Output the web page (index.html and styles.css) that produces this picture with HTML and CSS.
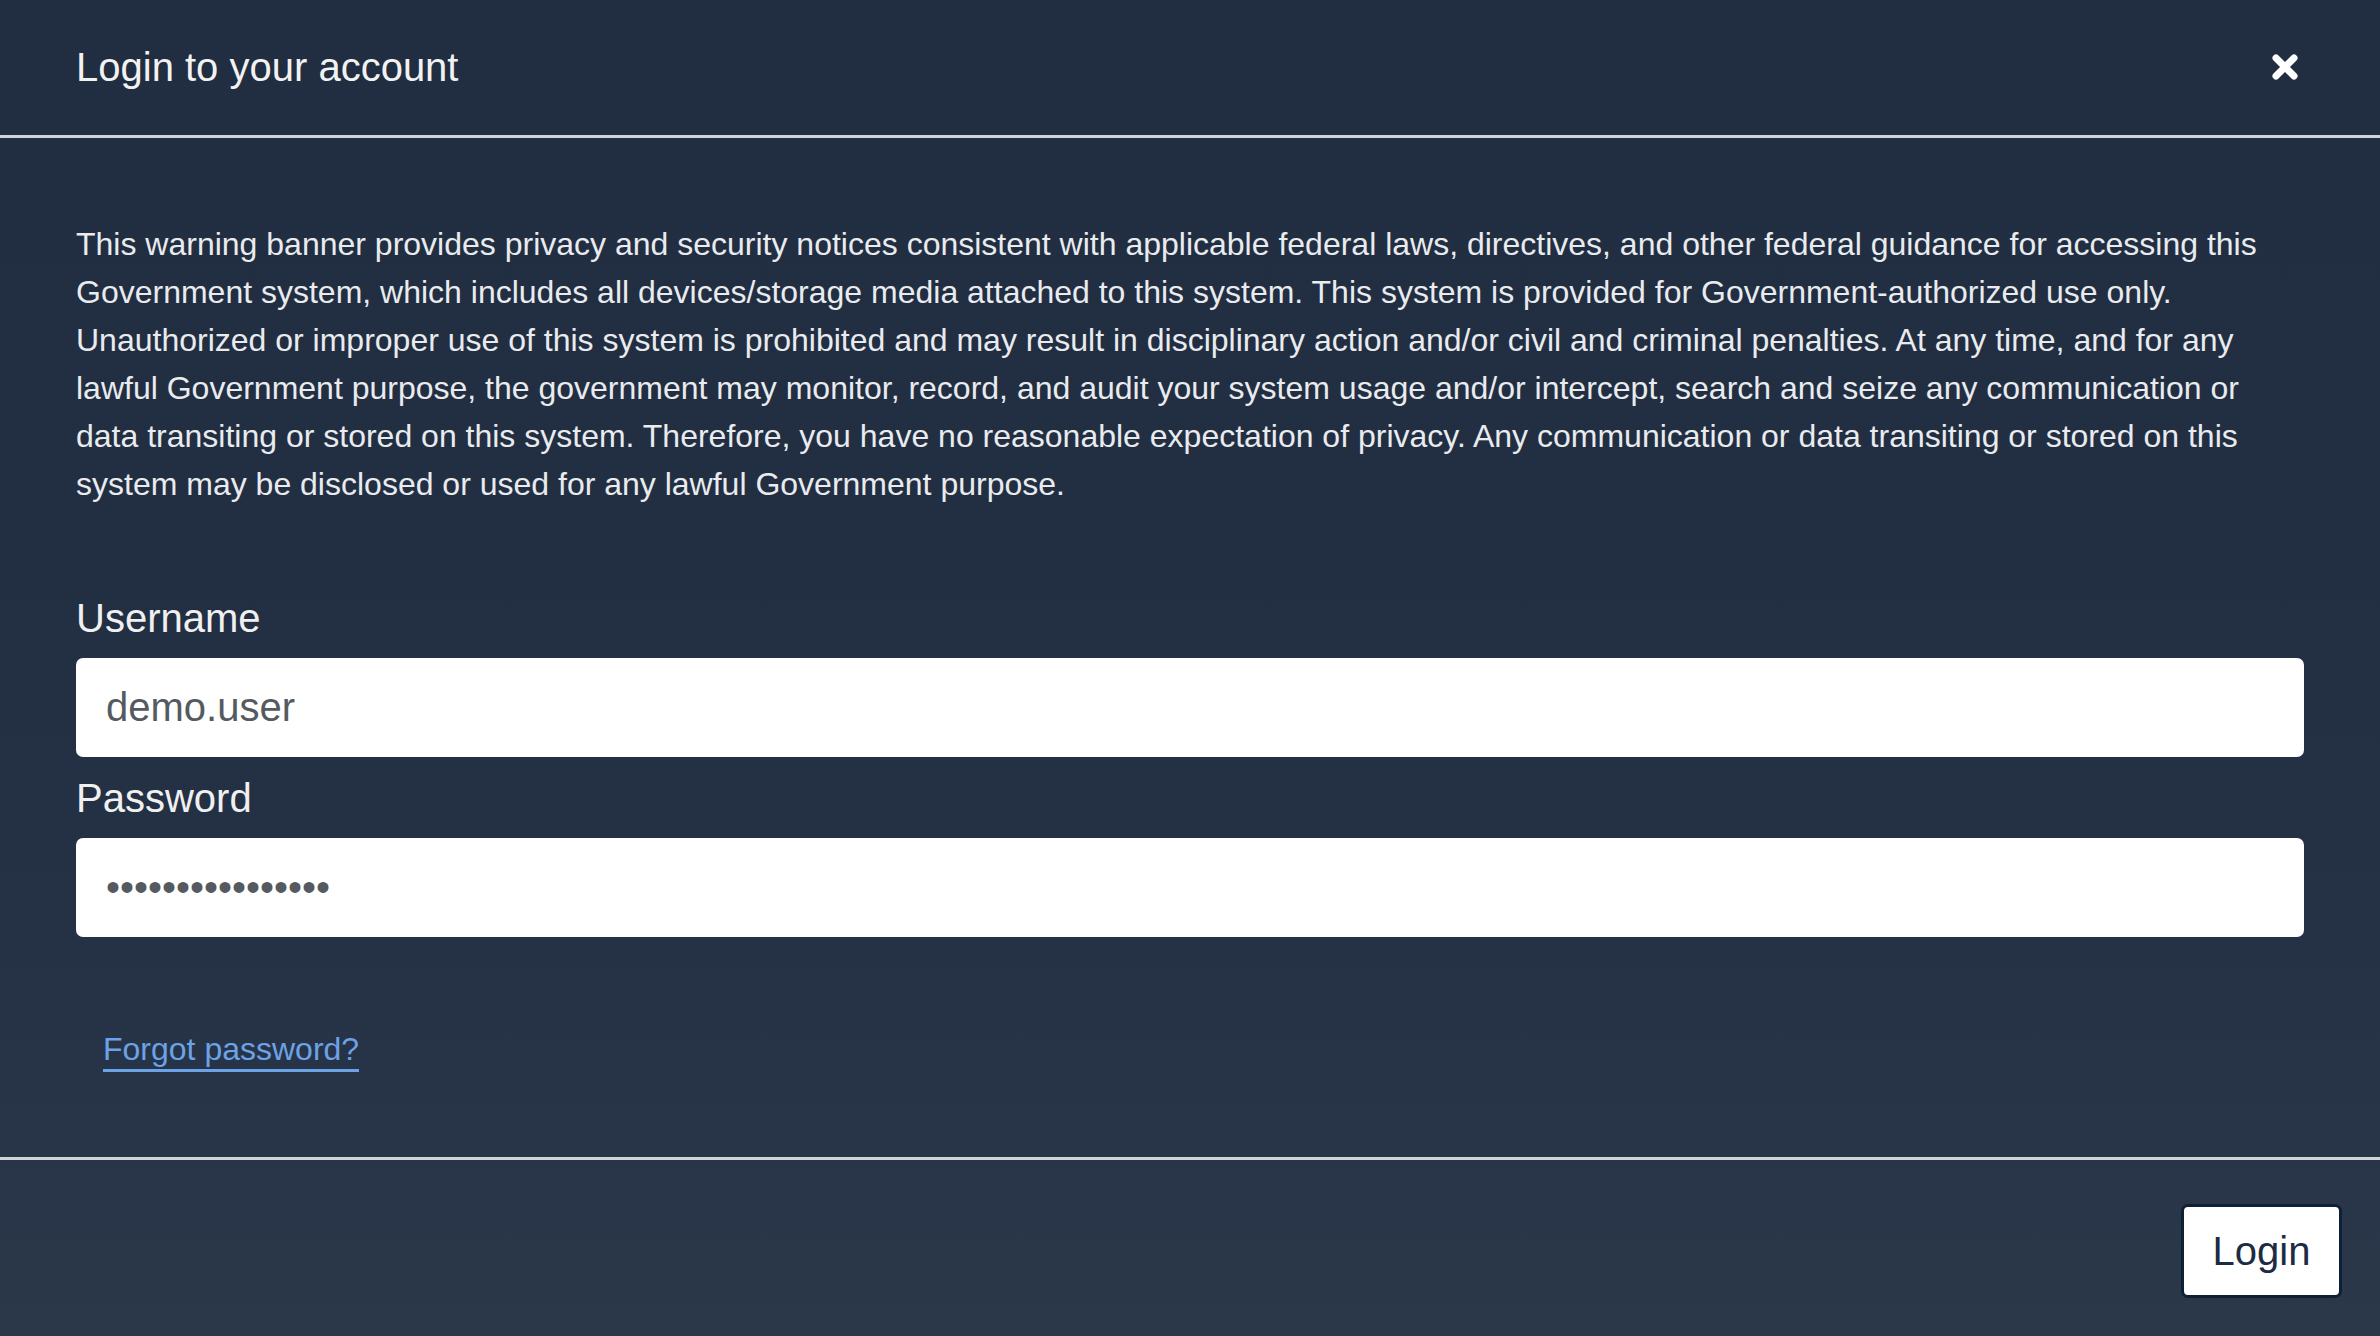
FILE: index.html
```html
<!DOCTYPE html>
<html lang="en">
<head>
<meta charset="utf-8">
<title>Login to your account</title>
<link rel="stylesheet" href="styles.css">
</head>
<body>
<div class="modal">
  <header class="modal-header">
    <h1 class="modal-title">Login to your account</h1>
    <button class="close" type="button" aria-label="Close">
      <svg width="30" height="30" viewBox="0 0 30 30"><path d="M6 6 L24 24 M24 6 L6 24" stroke="#ffffff" stroke-width="7" stroke-linecap="round"/></svg>
    </button>
  </header>
  <main class="modal-body">
    <p class="banner">This warning banner provides privacy and security notices consistent with applicable federal laws, directives, and other federal guidance for accessing this Government system, which includes all devices/storage media attached to this system. This system is provided for Government-authorized use only. Unauthorized or improper use of this system is prohibited and may result in disciplinary action and/or civil and criminal penalties. At any time, and for any lawful Government purpose, the government may monitor, record, and audit your system usage and/or intercept, search and seize any communication or data transiting or stored on this system. Therefore, you have no reasonable expectation of privacy. Any communication or data transiting or stored on this system may be disclosed or used for any lawful Government purpose.</p>
    <form class="form">
      <label class="label" for="username">Username</label>
      <input class="input" id="username" type="text" value="demo.user">
      <label class="label" for="password">Password</label>
      <input class="input" id="password" type="password" value="demopassword1234">
      <div class="forgot-row"><a class="forgot" href="#">Forgot password?</a></div>
    </form>
  </main>
  <footer class="modal-footer">
    <button class="btn-login" type="button">Login</button>
  </footer>
</div>
</body>
</html>
```
FILE: styles.css
```css
* { box-sizing: border-box; }
html, body { margin: 0; padding: 0; }
body {
  width: 2380px;
  height: 1336px;
  overflow: hidden;
  font-family: "Liberation Sans", Arial, sans-serif;
  background: linear-gradient(180deg, #212d40 0%, #222f43 40%, #253246 70%, #2b384a 100%);
  color: #ececec;
}
.modal { display: flex; flex-direction: column; height: 100%; }
.modal-header {
  display: flex;
  align-items: center;
  justify-content: space-between;
  height: 138px;
  padding: 0 70px 2px 76px;
  border-bottom: 3px solid #cfd2d6;
}
.modal-title {
  margin: 0;
  font-size: 40px;
  font-weight: 400;
  line-height: 48px;
  color: #f2f2f2;
}
.close {
  background: none;
  border: 0;
  padding: 0;
  width: 30px;
  height: 30px;
  margin-right: 10px;
  display: flex;
}
.modal-body {
  padding: 82px 76px 0 76px;
  height: 1019px;
}
.banner {
  margin: 0;
  font-size: 32px;
  line-height: 48px;
  color: #e9ebee;
}
.form { display: flex; flex-direction: column; margin-top: 86px; }
.label {
  font-size: 40px;
  line-height: 48px;
  color: #f0f0f0;
  margin-bottom: 16px;
}
.input {
  height: 99px;
  width: 100%;
  border: 0;
  border-radius: 7px;
  background: #ffffff;
  padding: 0 30px;
  font-family: "Liberation Sans", Arial, sans-serif;
  font-size: 40px;
  color: #555a60;
  margin-bottom: 17px;
  outline: none;
}
#password { font-size: 40px; }
.forgot-row { margin-top: 76px; padding-left: 27px; }
.forgot {
  font-size: 32px;
  line-height: 38px;
  color: #6ca2e6;
  text-decoration: none;
  border-bottom: 3px solid #6ca2e6;
  padding-bottom: 2px;
}
.modal-footer {
  border-top: 3px solid #cfd2d6;
  flex: 1;
  display: flex;
  justify-content: flex-end;
  align-items: flex-start;
  padding: 44px 38px 0 0;
}
.btn-login {
  width: 161px;
  height: 94px;
  background: #ffffff;
  border: 3px solid #0d2036;
  border-radius: 7px;
  font-family: "Liberation Sans", Arial, sans-serif;
  font-size: 40px;
  color: #1b2c44;
  padding: 0;
}
```
